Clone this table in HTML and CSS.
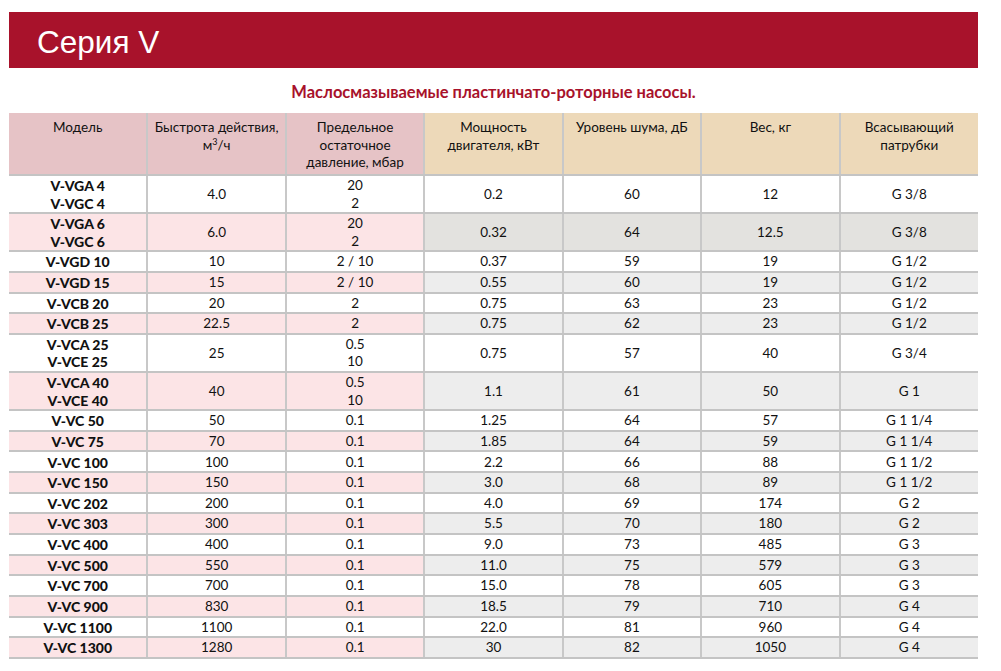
FILE: index.html
```html
<!DOCTYPE html>
<html lang="ru">
<head>
<meta charset="utf-8">
<title>Серия V</title>
<link rel="stylesheet" href="styles.css">
</head>
<body>
<div class="page">
  <header class="banner"><h1 class="banner-title">Серия V</h1></header>
  <h2 class="subtitle">Маслосмазываемые пластинчато-роторные насосы.</h2>
  <table class="spec">
    <colgroup>
      <col><col><col><col><col><col><col>
    </colgroup>
    <thead>
      <tr>
        <th>Модель</th>
        <th>Быстрота действия,<br>м<sup>3</sup>/ч</th>
        <th>Предельное<br>остаточное<br>давление, мбар</th>
        <th>Мощность<br>двигателя, кВт</th>
        <th>Уровень шума, дБ</th>
        <th>Вес, кг</th>
        <th>Всасывающий<br>патрубки</th>
      </tr>
    </thead>
    <tbody>
      <tr><td class="model">V-VGA 4<br>V-VGC 4</td><td>4.0</td><td>20<br>2</td><td>0.2</td><td>60</td><td>12</td><td>G 3/8</td></tr>
      <tr class="alt dark"><td class="model">V-VGA 6<br>V-VGC 6</td><td>6.0</td><td>20<br>2</td><td>0.32</td><td>64</td><td>12.5</td><td>G 3/8</td></tr>
      <tr><td class="model">V-VGD 10</td><td>10</td><td>2 / 10</td><td>0.37</td><td>59</td><td>19</td><td>G 1/2</td></tr>
      <tr class="alt"><td class="model">V-VGD 15</td><td>15</td><td>2 / 10</td><td>0.55</td><td>60</td><td>19</td><td>G 1/2</td></tr>
      <tr><td class="model">V-VCB 20</td><td>20</td><td>2</td><td>0.75</td><td>63</td><td>23</td><td>G 1/2</td></tr>
      <tr class="alt"><td class="model">V-VCB 25</td><td>22.5</td><td>2</td><td>0.75</td><td>62</td><td>23</td><td>G 1/2</td></tr>
      <tr><td class="model">V-VCA 25<br>V-VCE 25</td><td>25</td><td>0.5<br>10</td><td>0.75</td><td>57</td><td>40</td><td>G 3/4</td></tr>
      <tr class="alt"><td class="model">V-VCA 40<br>V-VCE 40</td><td>40</td><td>0.5<br>10</td><td>1.1</td><td>61</td><td>50</td><td>G 1</td></tr>
      <tr><td class="model">V-VC 50</td><td>50</td><td>0.1</td><td>1.25</td><td>64</td><td>57</td><td>G 1 1/4</td></tr>
      <tr class="alt"><td class="model">V-VC 75</td><td>70</td><td>0.1</td><td>1.85</td><td>64</td><td>59</td><td>G 1 1/4</td></tr>
      <tr><td class="model">V-VC 100</td><td>100</td><td>0.1</td><td>2.2</td><td>66</td><td>88</td><td>G 1 1/2</td></tr>
      <tr class="alt"><td class="model">V-VC 150</td><td>150</td><td>0.1</td><td>3.0</td><td>68</td><td>89</td><td>G 1 1/2</td></tr>
      <tr><td class="model">V-VC 202</td><td>200</td><td>0.1</td><td>4.0</td><td>69</td><td>174</td><td>G 2</td></tr>
      <tr class="alt"><td class="model">V-VC 303</td><td>300</td><td>0.1</td><td>5.5</td><td>70</td><td>180</td><td>G 2</td></tr>
      <tr><td class="model">V-VC 400</td><td>400</td><td>0.1</td><td>9.0</td><td>73</td><td>485</td><td>G 3</td></tr>
      <tr class="alt"><td class="model">V-VC 500</td><td>550</td><td>0.1</td><td>11.0</td><td>75</td><td>579</td><td>G 3</td></tr>
      <tr><td class="model">V-VC 700</td><td>700</td><td>0.1</td><td>15.0</td><td>78</td><td>605</td><td>G 3</td></tr>
      <tr class="alt"><td class="model">V-VC 900</td><td>830</td><td>0.1</td><td>18.5</td><td>79</td><td>710</td><td>G 4</td></tr>
      <tr><td class="model">V-VC 1100</td><td>1100</td><td>0.1</td><td>22.0</td><td>81</td><td>960</td><td>G 4</td></tr>
      <tr class="alt"><td class="model">V-VC 1300</td><td>1280</td><td>0.1</td><td>30</td><td>82</td><td>1050</td><td>G 4</td></tr>
    </tbody>
  </table>
</div>
</body>
</html>
```

FILE: styles.css
```css
html, body {
  margin: 0;
  padding: 0;
  background: #ffffff;
}

.page {
  width: 969px;
  padding: 12px 0 0 9px;
  font-family: Lato, "Open Sans", sans-serif;
  color: #111111;
}

.banner {
  height: 56px;
  background: #a8122b;
  display: flex;
  align-items: center;
  padding-left: 28px;
}

.banner-title {
  margin: 3px 0 0 0;
  font-family: "Liberation Sans", Arial, sans-serif;
  font-weight: normal;
  font-size: 31.5px;
  line-height: 40px;
  color: #ffffff;
}

.subtitle {
  margin: 14px 0 0 0;
  height: 31px;
  font-size: 16.5px;
  line-height: 20px;
  font-weight: bold;
  text-align: center;
  color: #a8122b;
}

.spec {
  width: 969px;
  table-layout: fixed;
  border-collapse: collapse;
  font-size: 13.5px;
}

.spec col {
  width: 138.43px;
}

.spec th {
  height: 55px;
  padding: 6px 4px 0 4px;
  vertical-align: top;
  font-weight: normal;
  line-height: 17.5px;
  text-align: center;
  border-bottom: 2px solid #c4c4c4;
  border-left: 2px solid #c8c8c8;
}

.spec th:nth-child(-n+3) {
  background: #e6c3c6;
}

.spec th:nth-child(n+4) {
  background: #edd9b9;
}

.spec th sup {
  font-size: 9px;
  line-height: 0;
  vertical-align: 5px;
}

.spec td {
  padding: 1.15px 4px 0 4px;
  line-height: 17.5px;
  text-align: center;
  vertical-align: middle;
  border-bottom: 2px solid #c4c4c4;
  border-left: 2px solid #c8c8c8;
}

.spec th:first-child,
.spec td:first-child {
  border-left: none;
}

.spec td.model {
  font-weight: 900;
  font-size: 14px;
}

.spec tr.alt td:nth-child(-n+3) {
  background: #fce4e6;
}

.spec tr.alt td:nth-child(n+4) {
  background: #ededed;
}

.spec tr.alt.dark td:nth-child(n+4) {
  background: #e3e2df;
}
```
